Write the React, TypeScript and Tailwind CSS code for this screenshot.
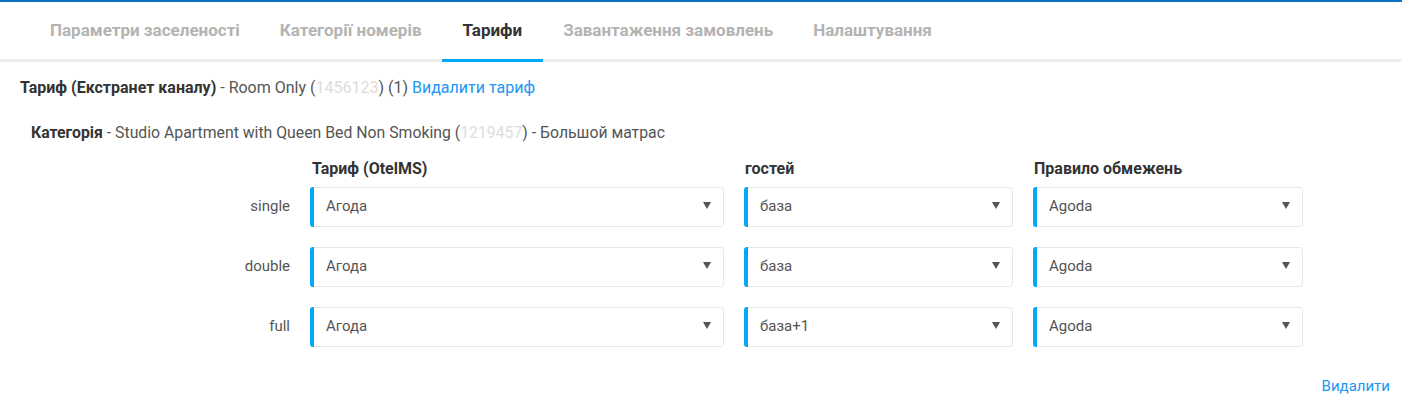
import React from "react";

const font = { fontFamily: '"Roboto", "Liberation Sans", sans-serif' };

function Select({ value }: { value: string }) {
  return (
    <div className="relative flex h-[40px] items-center rounded-[3px] border border-[#e8e8e8] bg-white pl-[15px] pr-[12px] text-[15px] text-[#555]">
      <div className="absolute left-[-1px] top-[-1px] bottom-[-1px] w-[4px] rounded-l-[3px] bg-[#03a9f4]" />
      <span className="flex-1">{value}</span>
      <svg width="8" height="7" viewBox="0 0 8 7" className="mt-[-2px]">
        <polygon points="0,0 8,0 4,7" fill="#555" />
      </svg>
    </div>
  );
}

export default function App() {
  const tabs = ["Параметри заселеності", "Категорії номерів", "Тарифи", "Завантаження замовлень", "Налаштування"];
  const rows: [string, string, string, string][] = [
    ["single", "Агода", "база", "Agoda"],
    ["double", "Агода", "база", "Agoda"],
    ["full", "Агода", "база+1", "Agoda"],
  ];
  return (
    <div className="h-[406px] w-[1402px] overflow-hidden bg-white text-[#333]" style={font}>
      <div className="h-[2px] bg-[#0a72c0]" />
      <div className="flex h-[60px] items-stretch border-b-[3px] border-[#eeeeee] pl-[30px]">
        {tabs.map((t) => (
          <div
            key={t}
            className={
              "relative flex items-center text-[17px] font-bold " +
              (t === "Тарифи" ? "px-[21px] text-[#333]" : "px-[20px] text-[#b3b3b3]")
            }
          >
            {t}
            {t === "Тарифи" && (
              <div className="absolute bottom-[-3px] left-0 right-0 h-[3px] bg-[#03a9f4]" />
            )}
          </div>
        ))}
      </div>
      <div className="pl-[20px] pt-[14px] text-[16px] text-[#555]">
        <span className="font-bold text-[#333]">Тариф (Екстранет каналу)</span> - Room Only (
        <span className="text-[#ddd]">1456123</span>) (1){" "}
        <span className="text-[#2196f3]">Видалити тариф</span>
      </div>
      <div className="pl-[31px] pt-[21px] text-[15.8px] text-[#555]">
        <span className="font-bold text-[#333]">Категорія</span> - Studio Apartment with Queen Bed Non Smoking (
        <span className="text-[#ddd]">1219457</span>) - Большой матрас
      </div>
      <div className="mt-[12px] grid grid-cols-[290px_414px_269px_270px] gap-x-[20px]">
        <div />
        <div className="pl-[2px] text-[16px] font-bold text-[#333]">Тариф (OtelMS)</div>
        <div className="pl-[1px] text-[16px] font-bold text-[#333]">гостей</div>
        <div className="pl-[1px] text-[16px] font-bold text-[#333]">Правило обмежень</div>
      </div>
      <div className="mt-[6px] grid grid-cols-[290px_414px_269px_270px] gap-x-[20px] gap-y-[20px]">
        {rows.map((r) => (
          <React.Fragment key={r[0]}>
            <div className="flex items-center justify-end text-[15px] text-[#555]">{r[0]}</div>
            <Select value={r[1]} />
            <Select value={r[2]} />
            <Select value={r[3]} />
          </React.Fragment>
        ))}
      </div>
      <div className="flex justify-end pr-[12px] pt-[28px] text-[15px] text-[#2196f3]">Видалити</div>
    </div>
  );
}
